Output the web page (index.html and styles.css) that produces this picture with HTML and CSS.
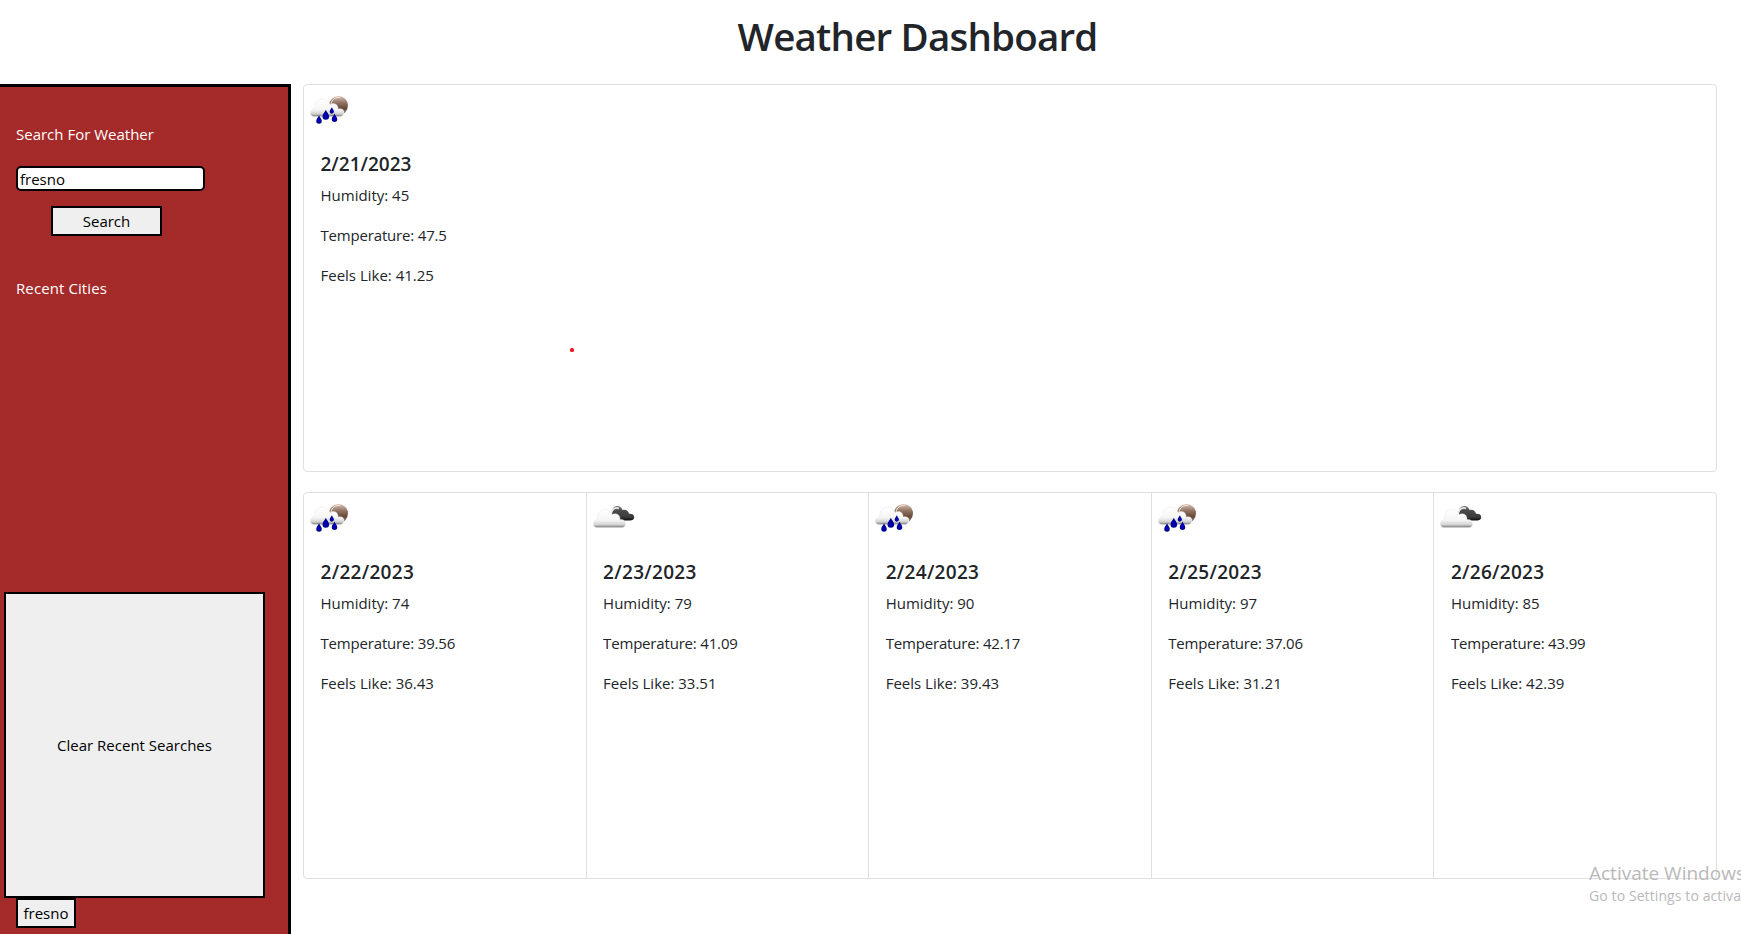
FILE: index.html
```html
<!DOCTYPE html>
<html lang="en">
<head>
<meta charset="utf-8">
<title>Weather Dashboard</title>
<link rel="stylesheet" href="styles.css">
</head>
<body>
<svg class="defs" width="0" height="0" aria-hidden="true">
  <defs>
    <linearGradient id="white-cloud" x1="0" y1="0" x2="0" y2="1">
      <stop offset="0" stop-color="#fff"/><stop offset=".6" stop-color="#f5f5f5"/><stop offset=".84" stop-color="#d4d4d4"/><stop offset="1" stop-color="#777"/>
    </linearGradient>
    <linearGradient id="dark-cloud" x1="0" y1="0" x2="0" y2="1">
      <stop offset="0" stop-color="#777"/><stop offset=".35" stop-color="#484848"/><stop offset=".75" stop-color="#3c3c3c"/><stop offset="1" stop-color="#0c0c0c"/>
    </linearGradient>
    <linearGradient id="moon" x1="0" y1="0" x2="0" y2="1">
      <stop offset="0" stop-color="#d9c3b5"/><stop offset=".35" stop-color="#937563"/><stop offset=".65" stop-color="#684a38"/><stop offset="1" stop-color="#8a7060"/>
    </linearGradient>
    <radialGradient id="drop" cx=".5" cy=".6" r=".6">
      <stop offset="0" stop-color="#0000cf"/><stop offset="1" stop-color="#000070"/>
    </radialGradient>
    <path id="raindrop" d="M0-5C.8-2.8 3.3-.6 3.3 1.7A3.3 3.3 0 0 1-3.3 1.7C-3.3-.6-.8-2.8 0-5Z" fill="url(#drop)"/>
    <symbol id="rain" viewBox="0 0 50 50">
      <circle cx="33.500" cy="20.500" r="9.500" fill="url(#moon)"/>
      <path d="M26 19C27 14 31 12 35 12.500" fill="none" stroke="#f3e8e1" stroke-width="1"/>
      <path d="M9.500 31.500C3.500 31.500 4 24 10 23.500C9 17 13.500 14 18 14.300C21.500 14.500 24 16.500 25 19.500C29.500 17 33.500 20 33 24C37.500 22.500 40.500 26 38.500 29C37.500 31 36 31.500 34 31.500Z" fill="url(#white-cloud)" stroke="#e3e3e3" stroke-width=".4"/>
      <use href="#raindrop" transform="translate(20.800 29.800)"/>
      <use href="#raindrop" transform="translate(26.800 25.400) scale(.65)"/>
      <use href="#raindrop" transform="translate(14 34.500) scale(.84)"/>
      <use href="#raindrop" transform="translate(29.500 32.700) scale(.84)"/>
    </symbol>
    <symbol id="clouds" viewBox="0 0 50 50">
      <path d="M24 22C23 15 27 12 31 13.200C33 13.800 34 15.500 34.500 17C38 16 40.500 18 41 20.800C44.500 20.500 46.500 22 46.200 24.500C46 26.500 44.500 27.500 42 27.500H31Z" fill="url(#dark-cloud)"/>
      <path d="M23.300 20C24.500 15.500 28 14 31 15.500" fill="none" stroke="#e8e8e8" stroke-width="1.700"/>
      <path d="M9 34.500C4 34.500 4 27 9.500 26.500C8.500 20 12.500 16.300 17 16.300C21 16.300 23.500 19 24 21.500C29 19 32.500 22.500 32 26.500C35.500 26 37.500 28 37.500 31C37.500 33 36 34.500 34 34.500Z" fill="url(#white-cloud)" stroke="#e3e3e3" stroke-width=".4"/>
    </symbol>
  </defs>
</svg>

<header class="page-header"><h1>Weather Dashboard</h1></header>
<div class="layout">
  <aside class="sidebar">
    <p class="search-label">Search For Weather</p>
    <input class="search-input" type="text" value="fresno">
    <button class="search-button">Search</button>
    <p class="recent-label">Recent Cities</p>
    <button class="clear-button">Clear Recent Searches</button>
    <button class="city-button">fresno</button>
  </aside>
  <main class="content">
    <section class="card-group today">
      <article class="card">
        <svg class="icon"><use href="#rain"/></svg>
        <div class="card-body"><h5>2/21/2023</h5><p>Humidity: 45</p><p class="temperature">Temperature: 47.5</p><p>Feels Like: 41.25</p></div>
      </article>
    </section>
    <section class="card-group forecast">
      <article class="card">
        <svg class="icon"><use href="#rain"/></svg>
        <div class="card-body"><h5>2/22/2023</h5><p>Humidity: 74</p><p class="temperature">Temperature: 39.56</p><p>Feels Like: 36.43</p></div>
      </article>
      <article class="card">
        <svg class="icon"><use href="#clouds"/></svg>
        <div class="card-body"><h5>2/23/2023</h5><p>Humidity: 79</p><p class="temperature">Temperature: 41.09</p><p>Feels Like: 33.51</p></div>
      </article>
      <article class="card">
        <svg class="icon"><use href="#rain"/></svg>
        <div class="card-body"><h5>2/24/2023</h5><p>Humidity: 90</p><p class="temperature">Temperature: 42.17</p><p>Feels Like: 39.43</p></div>
      </article>
      <article class="card">
        <svg class="icon"><use href="#rain"/></svg>
        <div class="card-body"><h5>2/25/2023</h5><p>Humidity: 97</p><p class="temperature">Temperature: 37.06</p><p>Feels Like: 31.21</p></div>
      </article>
      <article class="card">
        <svg class="icon"><use href="#clouds"/></svg>
        <div class="card-body"><h5>2/26/2023</h5><p>Humidity: 85</p><p class="temperature">Temperature: 43.99</p><p>Feels Like: 42.39</p></div>
      </article>
    </section>
  </main>
</div>
<span class="pointer-dot"></span>
<div class="watermark"><div class="watermark-title">Activate Windows</div><div class="watermark-text">Go to Settings to activa</div></div>
</body>
</html>
```

FILE: styles.css
```css
* { box-sizing: border-box; }
body {
  margin: 0;
  height: 934px;
  overflow: hidden;
  position: relative;
  background: #fff;
  color: #212529;
  font-family: "Open Sans", "Noto Sans", sans-serif;
  font-size: 15px;
  line-height: 24px;
}
h1, h5, p { margin: 0; }
button, input { font: inherit; letter-spacing: inherit; color: #000; }
.defs { position: absolute; }

.page-header { height: 84px; padding: 12px 0 0 94px; text-align: center; }
.page-header h1 { font-size: 38.5px; font-weight: 600; line-height: 48px; letter-spacing: -.8px; }

.layout { display: flex; height: 850px; }
.sidebar {
  width: 291px;
  flex: none;
  display: flex;
  flex-direction: column;
  align-items: flex-start;
  padding: 35px 0 0 16px;
  background: #a52a2a;
  border: solid #000;
  border-width: 3px 3px 0 0;
  color: #fff;
}
.search-input {
  width: 189px;
  height: 25px;
  margin-top: 20px;
  padding: 1px 2px;
  border: 2px solid #000;
  border-radius: 5px;
  background: #fff;
  outline: 0;
}
.search-button, .clear-button, .city-button {
  flex: none;
  padding: 0;
  border: 2px solid #000;
  background: #efefef;
}
.search-button { width: 111px; height: 30px; margin: 15px 0 0 35px; }
.recent-label { margin-top: 40px; letter-spacing: .1px; }
.clear-button { width: 261px; height: 306px; margin: 292px 0 0 -12px; }
.city-button { width: 60px; height: 30px; }

.content { flex: 1; padding: 0 24px 0 12px; }
.card-group {
  display: flex;
  height: 387px;
  border: 1px solid #dfdfdf;
  border-radius: 4px;
}
.today { height: 388px; margin-bottom: 20px; }
.card { flex: 1; min-width: 0; }
.card + .card { border-left: 1px solid #dfdfdf; }
.icon { display: block; width: 50px; height: 50px; margin-left: 1px; }
.card-body { padding: 17px 16.5px; }
.card-body h5 { margin-bottom: 7px; font-size: 19px; font-weight: 600; line-height: 24px; }
.forecast h5 { letter-spacing: .3px; }
.card-body p { margin-bottom: 16px; }
.card-body .temperature { letter-spacing: -.18px; }

.pointer-dot {
  position: absolute;
  left: 570px;
  top: 348px;
  width: 4px;
  height: 4px;
  border-radius: 1.5px;
  background: #ed1c24;
}
.watermark {
  position: absolute;
  left: 1589px;
  top: 860px;
  width: 152px;
  overflow: hidden;
  white-space: nowrap;
  color: #b9b9b9;
}
.watermark-title { font-size: 19px; line-height: 26px; }
.watermark-text { font-size: 14px; line-height: 20px; letter-spacing: .1px; }
```
